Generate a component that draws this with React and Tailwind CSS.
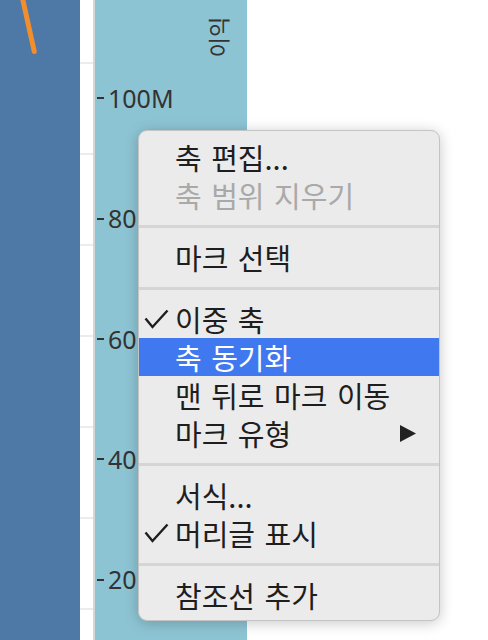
import React from 'react';

const ticks = ['100M', '80', '60', '40', '20'];

function Check() {
    return (
        <svg width="25" height="20" viewBox="0 0 25 20" className="ml-[5px]">
            <polyline points="1.5,9.5 8.5,18 23.5,1.5" fill="none" stroke="#1e1e1e" strokeWidth="2.4" strokeLinejoin="miter" />
        </svg>
    );
}

function Item({ label, checked, disabled, active, submenu }) {
    return (
        <div
            className={
                'flex h-[38px] items-center ' +
                (active ? 'bg-[#3f78ef] text-white' : disabled ? 'text-[#a9a9a9]' : 'text-[#1e1e1e]')
            }
        >
            <div className="flex w-[36px] shrink-0 items-center">{checked && <Check />}</div>
            <span className="flex-1 whitespace-nowrap">{label}</span>
            {submenu && (
                <svg width="16" height="17" viewBox="0 0 16 17" className="mr-[23px]">
                    <polygon points="0,0 16,8.5 0,17" fill="#222" />
                </svg>
            )}
        </div>
    );
}

function Sep() {
    return <div className="mt-[11px] mb-[10px] h-[3px] bg-[#d5d5d5]" />;
}

export default function App() {
    return (
        <div className="relative flex h-[640px] w-[488px] overflow-hidden bg-white font-['Noto_Sans',sans-serif]">
            {/* left pane */}
            <div className="relative w-[80px] shrink-0 bg-[#4e79a7]">
                <svg width="80" height="60" className="absolute left-0 top-0">
                    <line x1="22" y1="-4" x2="34.3" y2="51.5" stroke="#f28e2b" strokeWidth="5" strokeLinecap="round" />
                </svg>
            </div>

            {/* gutter with grid lines */}
            <div className="flex w-[13px] shrink-0 flex-col pt-[62px]">
                {[0, 1, 2, 3, 4, 5, 6].map((i) => (
                    <div key={i} className="h-[91px] shrink-0 border-t-2 border-[#ececec]" />
                ))}
            </div>
            <div className="w-[2px] shrink-0 bg-[#d6d6d6]" />

            {/* axis */}
            <div className="relative flex w-[152px] shrink-0 flex-col bg-[#8dc4d4] pt-[38px]">
                <span className="absolute left-[122px] top-[37px] -translate-x-1/2 -translate-y-1/2 -rotate-90 whitespace-nowrap font-['Noto_Sans_CJK_KR',sans-serif] text-[22px] leading-none text-[#333]">
                    이익
                </span>
                {ticks.map((t) => (
                    <div key={t} className="flex h-[121px] items-center">
                        <div className="ml-[2px] h-[2px] w-[7px] bg-[#333]" />
                        <span className="ml-[4px] text-[25px] leading-none text-[#333]">{t}</span>
                    </div>
                ))}
            </div>
            <div className="flex-1 bg-white" />

            {/* context menu */}
            <div className="absolute left-[138px] top-[130px] w-[302px] rounded-[9px] border border-[#c4c4c4] bg-[#ebebeb] pt-[7px] pb-[6px] font-['Noto_Sans_CJK_KR',sans-serif] text-[29px] leading-none [word-spacing:3px] shadow-[0_2px_14px_rgba(0,0,0,0.22)]">
                <Item label="축 편집..." />
                <Item label="축 범위 지우기" disabled />
                <Sep />
                <Item label="마크 선택" />
                <Sep />
                <Item label="이중 축" checked />
                <Item label="축 동기화" active />
                <Item label="맨 뒤로 마크 이동" />
                <Item label="마크 유형" submenu />
                <Sep />
                <Item label="서식..." />
                <Item label="머리글 표시" checked />
                <Sep />
                <Item label="참조선 추가" />
            </div>
        </div>
    );
}
